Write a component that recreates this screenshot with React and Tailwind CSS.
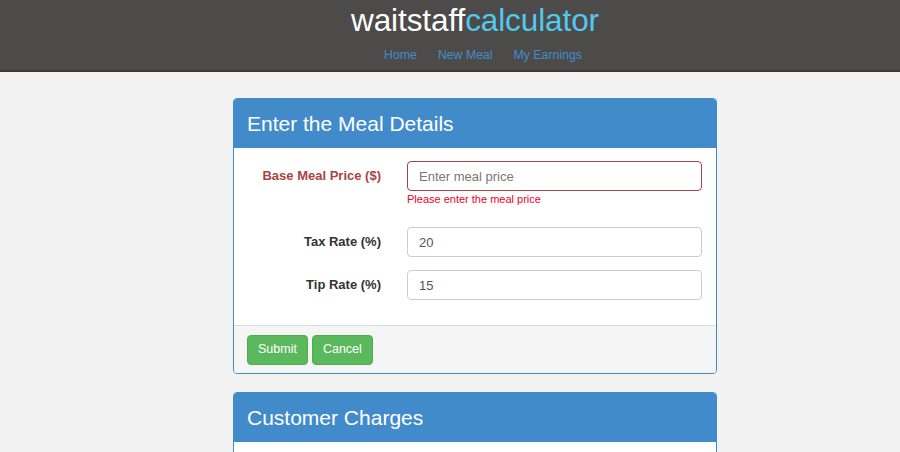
const fields = [
  { label: 'Tax Rate (%)', value: '20' },
  { label: 'Tip Rate (%)', value: '15' },
];

const Panel = ({ title, children }) => (
  <div className="w-[484px] border border-[#428bca] rounded-[4px] bg-white overflow-hidden">
    <div className="h-[49px] bg-[#428bca] px-[13px] flex items-center">
      <h2 className="text-[21px] text-white leading-none">{title}</h2>
    </div>
    {children}
  </div>
);

const App = () => {
  return (
    <div className="min-h-[452px] bg-[#f2f2f2] font-['Liberation_Sans',Arial,sans-serif]">
      <header className="h-[72px] bg-[#4d4b49] border-b-2 border-[#3a3938] flex flex-col items-center">
        <h1 className="mt-[2px] ml-[50px] text-[31.5px] leading-[36px] tracking-[-0.1px]">
          <span className="text-white">waitstaff</span>
          <span className="text-[#50c8f0]">calculator</span>
        </h1>
        <nav className="mt-[8px] ml-[66px] flex gap-[21px] text-[12.3px] text-[#428bca]">
          <a>Home</a>
          <a>New Meal</a>
          <a>My Earnings</a>
        </nav>
      </header>

      <main className="ml-[50px] flex flex-col items-center pt-[26px] gap-[18px]">
        <Panel title="Enter the Meal Details">
          <div className="pt-[13px] pb-[25px]">
            <div className="flex">
              <label className="w-[147px] h-[30px] flex items-center justify-end text-[13px] font-bold text-[#a94442]">
                Base Meal Price ($)
              </label>
              <div className="ml-[26px] w-[295px]">
                <input
                  placeholder="Enter meal price"
                  className="w-full h-[30px] px-[11px] border border-[#a94442] rounded-[4px] text-[13px] text-[#555] placeholder:text-[#777] outline-none"
                />
                <p className="mt-[1px] text-[11px] text-[#f0002a] leading-[14px]">Please enter the meal price</p>
              </div>
            </div>
            <div className="mt-[21px] flex flex-col gap-[13px]">
              {fields.map((f) => (
                <div key={f.label} className="flex">
                  <label className="w-[147px] h-[30px] flex items-center justify-end text-[13px] font-bold text-[#333]">
                    {f.label}
                  </label>
                  <input
                    defaultValue={f.value}
                    className="ml-[26px] w-[295px] h-[30px] px-[11px] border border-[#ccc] rounded-[4px] text-[13px] text-[#555] outline-none"
                  />
                </div>
              ))}
            </div>
          </div>
          <div className="h-[48px] bg-[#f5f5f5] border-t border-[#ddd] px-[13px] flex items-center gap-[4px]">
            <button className="h-[30px] px-[10px] bg-[#5cb85c] border border-[#4cae4c] rounded-[4px] text-[12.5px] text-white">
              Submit
            </button>
            <button className="h-[30px] px-[10px] bg-[#5cb85c] border border-[#4cae4c] rounded-[4px] text-[12.5px] text-white">
              Cancel
            </button>
          </div>
        </Panel>

        <Panel title="Customer Charges">
          <div className="h-[40px]" />
        </Panel>
      </main>
    </div>
  );
};

export default App;
